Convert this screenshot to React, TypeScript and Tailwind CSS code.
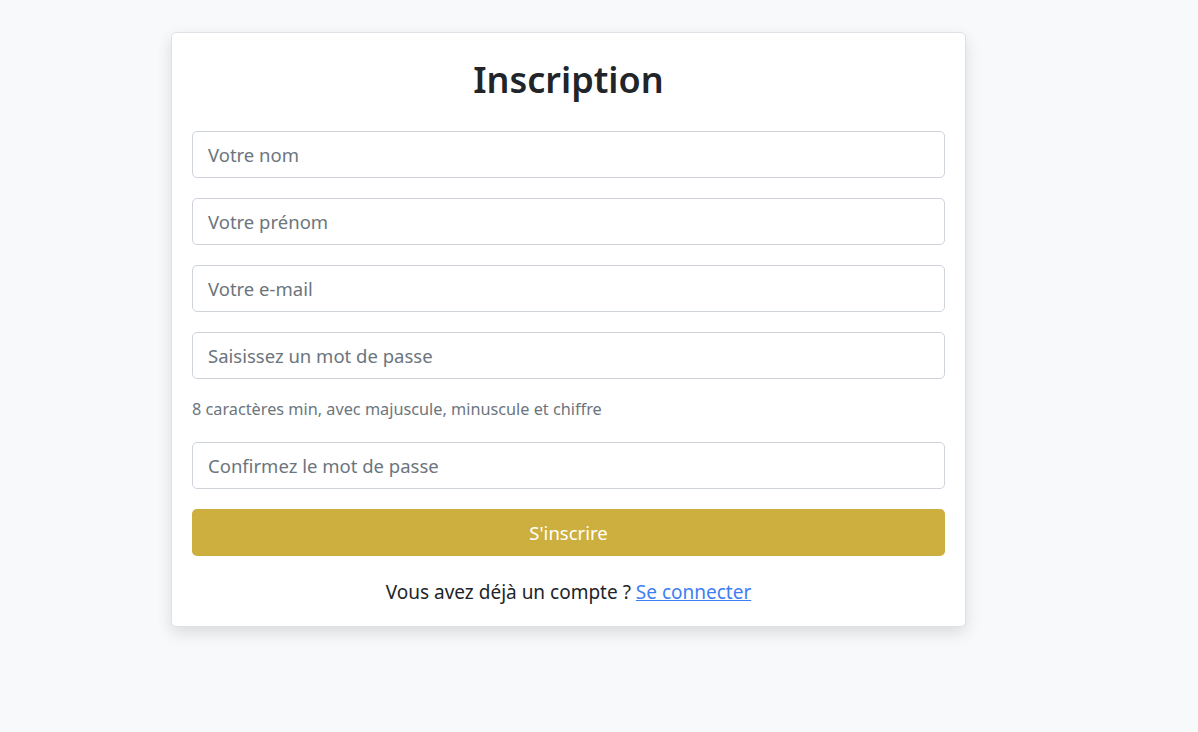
import React from "react";

const font = { fontFamily: '"Noto Sans", "Open Sans", sans-serif' };

function Field({ placeholder, type = "text" }: { placeholder: string; type?: string }) {
  return (
    <input
      type={type}
      placeholder={placeholder}
      className="block w-full h-[47px] px-[15px] rounded-[5px] border border-[#ced4da] bg-white text-[18.5px] text-[#212529] placeholder:text-[#6c757d] outline-none"
      style={font}
    />
  );
}

export default function App() {
  return (
    <div className="min-h-[732px] bg-[#f8f9fa] pt-[32px] pl-[171px]" style={font}>
      <div className="w-[795px] bg-white border border-[#dee2e6] rounded-[5px] shadow-[0_6px_16px_rgba(0,0,0,0.12)] p-5">
        <h1 className="text-center text-[36px] font-semibold text-[#212529] leading-[48px] mt-[3px] mb-[27px]">Inscription</h1>
        <form className="flex flex-col" onSubmit={(e) => e.preventDefault()}>
          <div className="mb-5"><Field placeholder="Votre nom" /></div>
          <div className="mb-5"><Field placeholder="Votre prénom" /></div>
          <div className="mb-5"><Field placeholder="Votre e-mail" type="email" /></div>
          <div className="mb-[21px]">
            <Field placeholder="Saisissez un mot de passe" type="password" />
            <div className="mt-[18px] text-[16.25px] leading-[24px] text-[#6c757d]">8 caractères min, avec majuscule, minuscule et chiffre</div>
          </div>
          <div className="mb-5"><Field placeholder="Confirmez le mot de passe" type="password" /></div>
          <button type="submit" className="w-full h-[47px] rounded-[5px] bg-[#cdaf40] text-white text-[18.5px]" style={font}>S'inscrire</button>
        </form>
        <p className="text-center mt-[23px] text-[19px] leading-[27px] text-[#212529]">
          Vous avez déjà un compte ? <a href="#" className="text-[#3d7ef5] underline">Se connecter</a>
        </p>
      </div>
    </div>
  );
}
